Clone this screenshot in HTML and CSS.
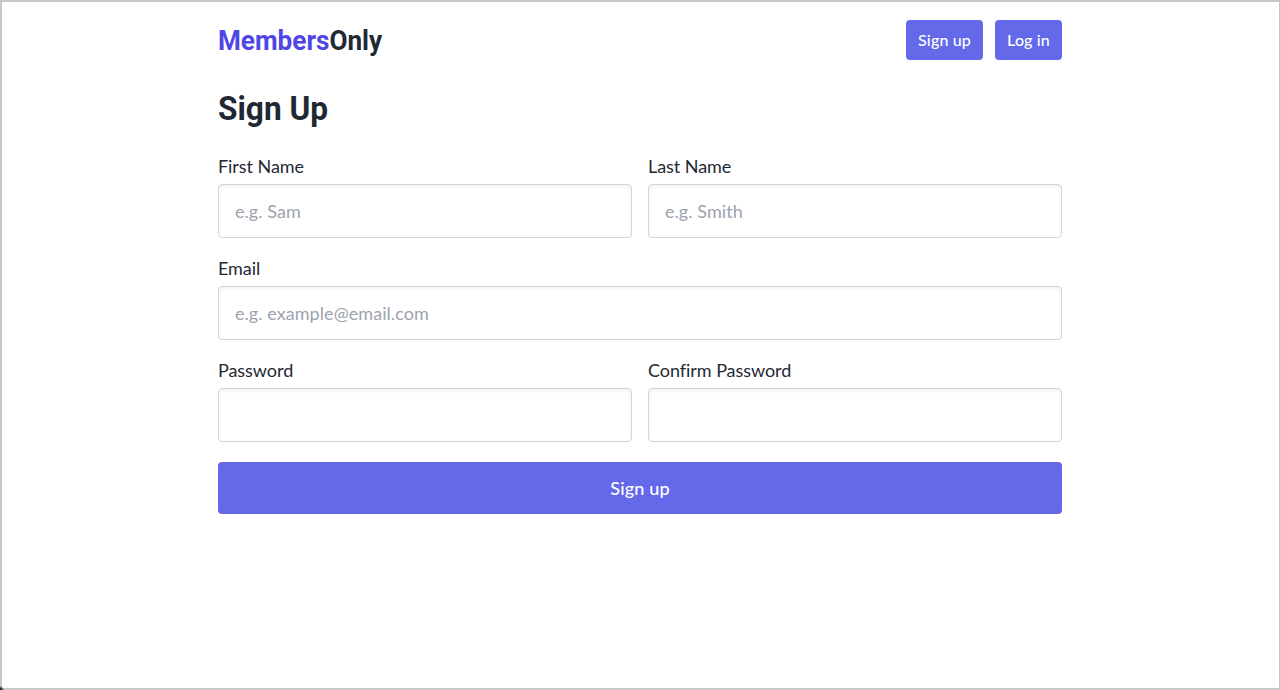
FILE: index.html
```html
<!DOCTYPE html>
<html lang="en">
<head>
<meta charset="utf-8">
<title>MembersOnly</title>
<link rel="stylesheet" href="styles.css">
</head>
<body>
<div class="page">
  <header class="header">
    <a class="logo"><span class="logo-accent">Members</span>Only</a>
    <nav class="nav">
      <a class="btn btn-small"><span>Sign up</span></a>
      <a class="btn btn-small"><span>Log in</span></a>
    </nav>
  </header>
  <main>
    <h1 class="title"><span>Sign Up</span></h1>
    <form class="form">
      <label class="field"><span class="label">First Name</span><input class="input" type="text" placeholder="e.g. Sam"></label>
      <label class="field"><span class="label">Last Name</span><input class="input" type="text" placeholder="e.g. Smith"></label>
      <label class="field field-wide"><span class="label">Email</span><input class="input" type="email" placeholder="e.g. example@email.com"></label>
      <label class="field"><span class="label">Password</span><input class="input" type="password"></label>
      <label class="field"><span class="label">Confirm Password</span><input class="input" type="password"></label>
      <button class="btn btn-submit" type="button">Sign up</button>
    </form>
  </main>
</div>
</body>
</html>
```
FILE: styles.css
```css
* { box-sizing: border-box; }
body {
  margin: 0;
  min-height: 690px;
  border: 2px solid #c8c8c8;
  border-right-width: 1px;
  background: #fff;
  color: #1f2933;
  font-family: Lato, sans-serif;
  font-size: 18px;
  font-variant-ligatures: none;
}
/* dark window corner */
body::after {
  content: "";
  position: absolute;
  left: 0;
  bottom: 0;
  width: 4px;
  height: 4px;
  background: radial-gradient(circle at 0 100%, #222 25%, transparent 75%);
}
.page { width: 844px; margin-left: 216px; padding-top: 18px; }
.header { display: flex; justify-content: space-between; align-items: center; height: 40px; }
.logo {
  font-family: Roboto, sans-serif;
  font-weight: 700;
  font-size: 28px;
  line-height: 40px;
  padding-top: 2px;
  transform: scaleX(0.933);
  transform-origin: left;
}
.logo-accent { color: #4f46e5; }
.nav { display: flex; gap: 12px; }
.btn {
  display: flex;
  align-items: center;
  justify-content: center;
  border: 0;
  border-radius: 4px;
  background: #6469ea;
  color: #fff;
  font-family: inherit;
  font-weight: 500;
  letter-spacing: 0.15px;
}
.btn-small { height: 40px; padding: 0 0 2px; width: 77px; font-size: 16px; }
.btn-small + .btn-small { width: 67px; }
.title {
  margin: 28px 0 0;
  font-family: Roboto, sans-serif;
  font-weight: 700;
  font-size: 34px;
  line-height: 40px;
  transform: scaleX(0.93);
  transform-origin: left;
}
.form { display: grid; grid-template-columns: 1fr 1fr; column-gap: 16px; row-gap: 16px; margin-top: 24px; }
.field { display: flex; flex-direction: column; }
.field-wide { grid-column: 1 / -1; }
.label { height: 32px; line-height: 28px; letter-spacing: -0.05px; }
.input {
  width: 100%;
  height: 54px;
  padding: 0 16px;
  border: 1px solid #d1d5db;
  border-radius: 4px;
  background: #fff;
  box-shadow: inset 0 2px 4px rgba(0, 0, 0, 0.06);
  font: inherit;
  letter-spacing: 0.06px;
}
.input::placeholder { color: #9ca3af; }
.btn-submit { grid-column: 1 / -1; margin-top: 4px; height: 52px; font-size: 18px; }
```
